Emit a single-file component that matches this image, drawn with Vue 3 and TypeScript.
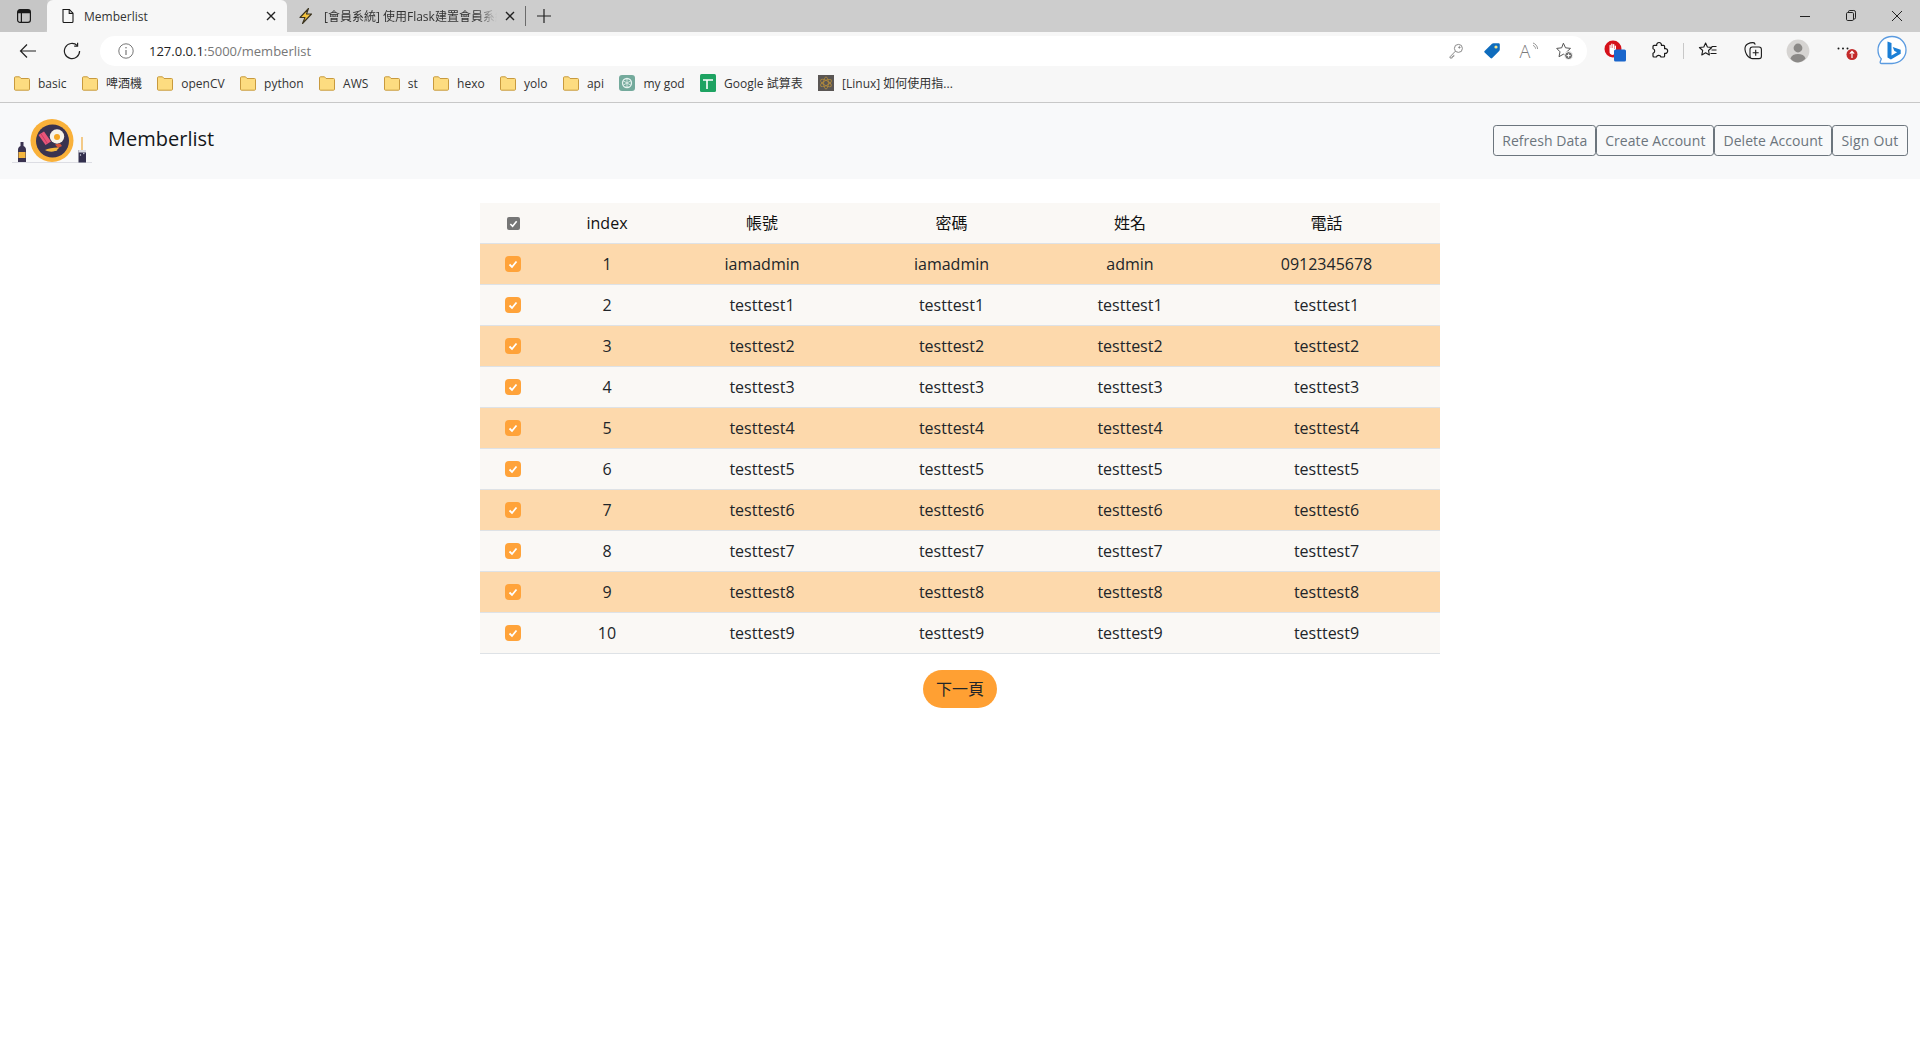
<script setup lang="ts">
import { computed } from 'vue'

type Bookmark = { label: string; icon: 'folder' | 'gpt' | 'sheet' | 'atom' }

const bookmarks: Bookmark[] = [
  { label: 'basic', icon: 'folder' },
  { label: '啤酒機', icon: 'folder' },
  { label: 'openCV', icon: 'folder' },
  { label: 'python', icon: 'folder' },
  { label: 'AWS', icon: 'folder' },
  { label: 'st', icon: 'folder' },
  { label: 'hexo', icon: 'folder' },
  { label: 'yolo', icon: 'folder' },
  { label: 'api', icon: 'folder' },
  { label: 'my god', icon: 'gpt' },
  { label: 'Google 試算表', icon: 'sheet' },
  { label: '[Linux] 如何使用指...', icon: 'atom' }
]

const actions = ['Refresh Data', 'Create Account', 'Delete Account', 'Sign Out']
const columns = ['index', '帳號', '密碼', '姓名', '電話']

const members = computed(() => {
  const rows = [{ id: 1, account: 'iamadmin', password: 'iamadmin', name: 'admin', phone: '0912345678' }]
  for (let i = 1; i <= 9; i++) {
    const t = `testtest${i}`
    rows.push({ id: i + 1, account: t, password: t, name: t, phone: t })
  }
  return rows
})
</script>

<template>
  <div class="page">
    <!-- browser tabs -->
    <div class="tabstrip">
      <div class="side-btn">
        <svg width="16" height="16" viewBox="0 0 16 16" fill="none" stroke="#1a1a1a" stroke-width="1.2">
          <rect x="1.6" y="1.6" width="12.8" height="12.8" rx="2.4" />
          <path d="M1.6 4.6h12.8M5.4 4.6v9.8" />
          <path d="M2 2h12v2.6H2z" fill="#1a1a1a" stroke="none" />
        </svg>
      </div>
      <div class="tab active">
        <svg width="16" height="16" viewBox="0 0 16 16" fill="none" stroke="#1a1a1a" stroke-width="1.1">
          <path d="M3 1.5h6.4L13 5.2v8.3a1 1 0 0 1-1 1H4a1 1 0 0 1-1-1z" />
          <path d="M9.2 1.5v3.9H13" />
        </svg>
        <span class="tab-title">Memberlist</span>
        <svg class="tab-x" width="10" height="10" viewBox="0 0 10 10" stroke="#222" stroke-width="1.4">
          <path d="M1 1l8 8M9 1l-8 8" />
        </svg>
      </div>
      <div class="tab second">
        <svg width="18" height="18" viewBox="0 0 18 18" fill="#f3c23c" stroke="#3a3320" stroke-width="1.1" stroke-linejoin="round">
          <path d="M11.5 1.5L3 10.5h5l-2.5 6 9-9.5H9.5z" />
        </svg>
        <span class="tab-title faded">[會員系統] 使用Flask建置會員系統</span>
        <svg class="tab-x" width="10" height="10" viewBox="0 0 10 10" stroke="#222" stroke-width="1.4">
          <path d="M1 1l8 8M9 1l-8 8" />
        </svg>
      </div>
      <span class="tab-sep"></span>
      <svg class="tab-plus" width="16" height="16" viewBox="0 0 16 16" stroke="#222" stroke-width="1.2">
        <path d="M8 1v14M1 8h14" />
      </svg>
      <div class="win-controls">
        <svg width="46" height="32" viewBox="0 0 46 32" stroke="#222" stroke-width="1" fill="none">
          <path d="M18 16.5h10" />
        </svg>
        <svg width="46" height="32" viewBox="0 0 46 32" stroke="#222" stroke-width="1" fill="none">
          <rect x="18.5" y="12.5" width="7" height="8" rx="1.2" />
          <path d="M20.5 12.5v-.8a1.2 1.2 0 0 1 1.2-1.2h4.1a1.7 1.7 0 0 1 1.7 1.7v5.6a1.2 1.2 0 0 1-1.2 1.2h-.8" />
        </svg>
        <svg width="46" height="32" viewBox="0 0 46 32" stroke="#222" stroke-width="1" fill="none">
          <path d="M18 11l10 10M28 11L18 21" />
        </svg>
      </div>
    </div>

    <!-- address bar row -->
    <div class="toolbar">
      <div class="tool">
        <svg width="18" height="18" viewBox="0 0 18 18" fill="none" stroke="#222" stroke-width="1.2">
          <path d="M17 9H1.5M8 2.5L1.5 9 8 15.5" />
        </svg>
      </div>
      <div class="tool">
        <svg width="18" height="18" viewBox="0 0 18 18" fill="none" stroke="#222" stroke-width="1.2">
          <path d="M14.3 3.6A7.6 7.6 0 1 0 16.6 9" />
          <path d="M14.6 0.8v3.4h-3.4" />
        </svg>
      </div>
      <div class="address">
        <div class="info">
          <svg width="16" height="16" viewBox="0 0 16 16" fill="none" stroke="#777" stroke-width="1">
            <circle cx="8" cy="8" r="7.2" />
            <path d="M8 7v5" stroke-width="1.2" />
            <circle cx="8" cy="4.8" r=".8" fill="#777" stroke="none" />
          </svg>
        </div>
        <span class="url">127.0.0.1<span class="url-dim">:5000/memberlist</span></span>
        <div class="addr-icons">
          <div class="addr-icon">
            <svg width="16" height="16" viewBox="0 0 16 16" fill="none" stroke="#8a8a8a" stroke-width="1">
              <circle cx="10.4" cy="5.4" r="4" />
              <path d="M7.4 8.2L2 13.8V15h2.2v-1.6h1.6v-1.6" />
              <circle cx="11.4" cy="4.4" r=".7" fill="#8a8a8a" />
            </svg>
          </div>
          <div class="addr-icon">
            <svg width="18" height="18" viewBox="0 0 18 18">
              <path d="M10.4 1.2h5.2a1.2 1.2 0 0 1 1.2 1.2v5.2a2 2 0 0 1-.6 1.4l-7 7a1.2 1.2 0 0 1-1.7 0L1.6 10.6a1.2 1.2 0 0 1 0-1.7l7.4-7.1a2 2 0 0 1 1.4-.6z" fill="#0f6cbd" />
              <circle cx="13" cy="5" r="1.6" fill="#f6e58d" />
            </svg>
          </div>
          <div class="addr-icon">
            <span class="read-a">A</span>
            <svg class="read-w" width="8" height="10" viewBox="0 0 8 10" fill="none" stroke="#8a8a8a" stroke-width=".9">
              <path d="M1 1c2.5.8 4.5 3 4.6 6M1 3.4c1.4.5 2.4 1.7 2.6 3.3" />
            </svg>
          </div>
          <div class="addr-icon">
            <svg width="20" height="20" viewBox="0 0 20 20" fill="none" stroke="#555" stroke-width="1">
              <path d="M9.4 2.2l2.1 4.6 5 .6-3.7 3.4 1 4.9-4.4-2.500-4.400 2.500 1-4.900L2.700 7.400l5-.6z" />
              <circle cx="14.600" cy="14.600" r="4" fill="#6f6f6f" stroke="#fff" />
              <path d="M14.600 12.600v4M12.600 14.600h4" stroke="#fff" stroke-width="1" />
            </svg>
          </div>
        </div>
      </div>
      <div class="tools-right">
        <div class="tool">
          <svg width="24" height="24" viewBox="0 0 24 24">
            <path d="M10 1.500a8.500 8.500 0 1 0 0 17a8.500 8.500 0 0 0 0-17z" fill="#d5111a" />
            <path d="M6.500 11V6.400c0-.9 1.300-.9 1.300 0V9h.4V5.200c0-.9 1.400-.9 1.400 0V9h.4V5.600c0-.9 1.400-.9 1.400 0V10h.4V7.200c0-.8 1.200-.8 1.200 0v5.400c0 2-1.400 3.300-3.400 3.300-1.600 0-2.400-.8-3-2.200z" fill="#fff" />
            <rect x="11" y="10.500" width="12" height="12" rx="1.600" fill="#1a66cc" />
          </svg>
        </div>
        <div class="tool">
          <svg width="20" height="20" viewBox="0 0 20 20" fill="none" stroke="#1a1a1a" stroke-width="1.200" stroke-linejoin="round">
            <path d="M7.700 4.400a2.400 2.400 0 1 1 4.700 0h2.200a1 1 0 0 1 1 1v2.300a2.400 2.400 0 1 1 0 4.600v2.700a1 1 0 0 1-1 1h-2.600a2.400 2.400 0 0 0-4.600 0H5a1 1 0 0 1-1-1v-2.700a2.400 2.400 0 0 0 0-4.600V5.400a1 1 0 0 1 1-1z" />
          </svg>
        </div>
        <span class="tool-sep"></span>
        <div class="tool">
          <svg width="20" height="20" viewBox="0 0 20 20" fill="none" stroke="#1a1a1a" stroke-width="1.100" stroke-linejoin="round">
            <path d="M7.600 2l1.800 4 4.400.5-3.300 3 .9 4.400-3.800-2.200-3.800 2.200.9-4.400-3.300-3 4.400-.5z" />
            <path d="M13.500 5.500h5M13.500 9h5M12.500 12.500h6" />
          </svg>
        </div>
        <div class="tool">
          <svg width="20" height="20" viewBox="0 0 20 20" fill="none" stroke="#1a1a1a" stroke-width="1.100">
            <path d="M7 17c-2.400-1.600-4.600-5-5-8.400-.2-2 .6-4.400 2.600-5.600C6 2.200 8 1.600 10 1.600c1 0 2 .8 2.200 2" />
            <rect x="7" y="6" width="11.400" height="11.600" rx="2.400" />
            <path d="M12.700 8.800v6M9.700 11.800h6" />
          </svg>
        </div>
        <div class="tool">
          <svg width="24" height="24" viewBox="0 0 24 24">
            <circle cx="12" cy="12" r="11.400" fill="#d6d4d2" />
            <circle cx="12" cy="9" r="4.400" fill="#8b8987" />
            <path d="M4.400 19.400c1-3 4-4.400 7.600-4.400s6.600 1.400 7.600 4.400A11.400 11.400 0 0 1 12 23.400c-3 0-5.600-1.600-7.600-4z" fill="#8b8987" />
          </svg>
        </div>
        <div class="tool">
          <svg width="30" height="20" viewBox="0 0 30 20">
            <circle cx="10.500" cy="7.500" r="1" fill="#1a1a1a" />
            <circle cx="15" cy="7.500" r="1" fill="#1a1a1a" />
            <circle cx="19.500" cy="7.500" r="1" fill="#1a1a1a" />
            <circle cx="24" cy="13.500" r="5.500" fill="#c42b2b" />
            <path d="M24 17v-6.500M21.800 12.600l2.200-2.200 2.200 2.200" stroke="#fff" stroke-width="1.200" fill="none" />
          </svg>
        </div>
        <div class="tool bing">
          <svg width="32" height="32" viewBox="0 0 32 32">
            <path d="M16 1.500c8 0 14 6 14 13.500s-6 13.500-14 13.500H5.500c-1.200 0-1.600-.9-1.200-2l1-2.600C3 21.500 2 18.500 2 15 2 7.500 8 1.500 16 1.500z" fill="#fff" stroke="#5b9be0" stroke-width="1.300" />
            <path d="M11.500 6.500l4 1.400v12.600l5.600-3.200-2.700-1.300-1.700-4.100 8 2.800v4l-9.800 5.800-3.400-1.900z" fill="#1b7fd6" />
          </svg>
        </div>
      </div>
    </div>

    <!-- bookmarks -->
    <div class="bookmarks">
      <div v-for="b in bookmarks" :key="b.label" class="bookmark">
        <svg v-if="b.icon === 'folder'" width="16" height="15" viewBox="0 0 16 15">
          <path d="M1.500.8h4l1.500 1.700h7.500a1 1 0 0 1 1 1v9.700a1 1 0 0 1-1 1h-13a1 1 0 0 1-1-1V1.800a1 1 0 0 1 1-1z" fill="#fddc80" stroke="#c89a3e" />
        </svg>
        <svg v-else-if="b.icon === 'gpt'" width="16" height="16" viewBox="0 0 16 16">
          <rect width="16" height="16" rx="3" fill="#74aa9c" />
          <circle cx="8" cy="8" r="4.500" fill="none" stroke="#e6f2ef" stroke-width="1.300" />
          <path d="M8 3.500v9M4 5.700l8 4.600M12 5.700l-8 4.600" stroke="#e6f2ef" stroke-width=".8" />
        </svg>
        <svg v-else-if="b.icon === 'sheet'" width="16" height="18" viewBox="0 0 16 18">
          <rect width="16" height="18" rx="1.500" fill="#1ea362" />
          <path d="M3 6h10M7 6v9" stroke="#fff" stroke-width="1.600" />
        </svg>
        <svg v-else width="16" height="16" viewBox="0 0 16 16">
          <rect width="16" height="16" fill="#5a5654" />
          <g fill="none" stroke="#b08a3c" stroke-width=".9">
            <ellipse cx="8" cy="8" rx="2.400" ry="6" />
            <ellipse cx="8" cy="8" rx="2.400" ry="6" transform="rotate(60 8 8)" />
            <ellipse cx="8" cy="8" rx="2.400" ry="6" transform="rotate(120 8 8)" />
          </g>
        </svg>
        <span>{{ b.label }}</span>
      </div>
    </div>

    <!-- the actual page -->
    <nav class="navbar">
      <div class="brand">
        <svg class="logo" width="80" height="60" viewBox="0 0 80 60">
          <path d="M0 51.500h80" stroke="#dcdde3" stroke-width="1.200" />
          <circle cx="40" cy="29.500" r="21.500" fill="#f9b13a" />
          <circle cx="40.500" cy="30" r="16.500" fill="#3a3350" />
          <path d="M26.500 24l5.500-3.500 7 10-5.500 3.500z" fill="#e8557a" />
          <path d="M29 22.800l6.500 10" stroke="#c93c60" stroke-width="1" />
          <circle cx="45" cy="25.500" r="7.200" fill="#f7f3ea" />
          <circle cx="45" cy="26" r="3" fill="#f5a623" />
          <path d="M43 33.500l5-1 2 2.500-4 2z" fill="#d9553a" />
          <path d="M33 39c3-1.500 8-2.500 13-2.500 1.500 0 .5 1.500-1 2.200 1 .6-.5 1.300-2 1.300-3 1.300-7 .8-10-1z" fill="#f4b73f" />
          <path d="M8.500 31h3v4c2 1 2.500 2 2.500 4v12H6V39c0-2 .5-3 2.500-4z" fill="#3a3350" />
          <rect x="6.500" y="41" width="7" height="6" fill="#f4b73f" />
          <path d="M70 26v13" stroke="#f0a93a" stroke-width="1.200" />
          <path d="M66.500 39h7.500v12.500h-7.500z" fill="#33304e" />
          <path d="M66.500 39h7.500v2.500h-7.500z" fill="#d8dbe4" />
          <circle cx="68.500" cy="44" r=".7" fill="#d8dbe4" />
          <circle cx="71.800" cy="42.500" r=".7" fill="#d8dbe4" />
        </svg>
        <span class="brand-name">Memberlist</span>
      </div>
      <div class="actions">
        <button v-for="a in actions" :key="a" class="action" type="button">{{ a }}</button>
      </div>
    </nav>

    <main class="content">
      <table class="members">
        <thead>
          <tr>
            <th>
              <span class="check head">
                <svg width="9" height="9" viewBox="0 0 10 10" fill="none" stroke="#fff" stroke-width="1.800">
                  <path d="M1.500 5.500l2.500 2.500 4.500-5.500" />
                </svg>
              </span>
            </th>
            <th v-for="c in columns" :key="c">{{ c }}</th>
          </tr>
        </thead>
        <tbody>
          <tr v-for="m in members" :key="m.id" :class="{ odd: m.id % 2 === 1 }">
            <td>
              <span class="check">
                <svg width="10" height="10" viewBox="0 0 10 10" fill="none" stroke="#fff" stroke-width="1.800">
                  <path d="M1.500 5.500l2.500 2.500 4.500-5.500" />
                </svg>
              </span>
            </td>
            <td>{{ m.id }}</td>
            <td>{{ m.account }}</td>
            <td>{{ m.password }}</td>
            <td>{{ m.name }}</td>
            <td>{{ m.phone }}</td>
          </tr>
        </tbody>
      </table>
      <button class="next" type="button">下一頁</button>
    </main>
  </div>
</template>

<style>
html,
body {
  margin: 0;
  background: #fff;
}
</style>

<style scoped>
.page {
  width: 1920px;
  height: 1040px;
  overflow: hidden;
  background: #fff;
  color: #212529;
  font-family: "Open Sans", "Noto Sans CJK TC", sans-serif;
}

.tabstrip {
  height: 32px;
  background: #cdcdcd;
  display: flex;
  align-items: center;
  font-size: 12px;
}

.side-btn {
  width: 47px;
  height: 32px;
  display: flex;
  align-items: center;
  justify-content: center;
  background: #c6c6c6;
  border-radius: 0 0 4px 0;
}

.tab {
  width: 240px;
  height: 32px;
  box-sizing: border-box;
  padding: 0 11px 0 10px;
  display: flex;
  align-items: center;
  color: #333;
}

.tab.second {
  width: 238px;
  padding-right: 10px;
}

.tab.active {
  background: #f7f7f7;
  border-radius: 6px 6px 0 0;
  padding-left: 13px;
}

.tab-title {
  margin-left: 8px;
  flex: 1;
  white-space: nowrap;
  overflow: hidden;
}

.tab-title.faded {
  margin-left: 9px;
  -webkit-mask-image: linear-gradient(to right, #000 88%, transparent 100%);
  mask-image: linear-gradient(to right, #000 88%, transparent 100%);
  margin-right: 8px;
}

.tab-x {
  flex: none;
}

.tab-sep {
  width: 1px;
  height: 20px;
  background: #6b6b6b;
}

.tab-plus {
  margin-left: 10px;
}

.win-controls {
  margin-left: auto;
  display: flex;
}

.toolbar {
  height: 38px;
  background: #f7f7f7;
  display: flex;
  align-items: center;
  padding: 0 6px;
}

.tool {
  width: 44px;
  height: 30px;
  flex: none;
  display: flex;
  align-items: center;
  justify-content: center;
}

.address {
  flex: 1;
  height: 30px;
  margin-left: 6px;
  background: #fff;
  border-radius: 15px;
  display: flex;
  align-items: center;
  padding-right: 5px;
  font-size: 13px;
}

.info {
  width: 52px;
  display: flex;
  justify-content: center;
}

.url {
  color: #1f1f1f;
  margin-left: -3px;
}

.url-dim {
  color: #777;
}

.addr-icons {
  margin-left: auto;
  display: flex;
}

.addr-icon {
  width: 36px;
  height: 30px;
  display: flex;
  align-items: center;
  justify-content: center;
  position: relative;
}

.read-a {
  font-size: 18px;
  font-weight: 300;
  line-height: 1;
  color: #7a7a7a;
  margin-right: 6px;
}

.read-w {
  position: absolute;
  top: 6px;
  right: 6px;
}

.tools-right {
  margin-left: 6px;
  display: flex;
  align-items: center;
}

.tools-right .tool + .tool {
  margin-left: 1px;
}

.tools-right .tool:nth-child(2) {
  margin-left: 0;
}

.tool-sep {
  width: 1px;
  height: 16px;
  margin: 0 2px;
  background: #c8c8c8;
}

.tools-right .tool.bing {
  margin-left: 5px;
}

.bookmarks {
  height: 33px;
  box-sizing: border-box;
  padding: 0 0 6px 14px;
  background: #f7f7f7;
  border-bottom: 1px solid #c8c8c8;
  display: flex;
  align-items: center;
  gap: 15.4px;
  font-size: 12px;
  color: #333;
}

.bookmark {
  display: flex;
  align-items: center;
  gap: 8px;
  white-space: nowrap;
}

.navbar {
  height: 76px;
  box-sizing: border-box;
  padding: 8px 12px;
  background: #f8f9fa;
  display: flex;
  justify-content: space-between;
}

.brand {
  display: flex;
  align-items: center;
  gap: 16px;
}

.brand-name {
  font-size: 20px;
  color: #14171a;
  margin-bottom: 6px;
}

.actions {
  display: flex;
  margin-top: 14px;
  height: 31px;
}

.action {
  font: inherit;
  font-size: 14px;
  line-height: 21px;
  letter-spacing: 0.05px;
  padding: 4px 8px;
  color: #6c757d;
  background: transparent;
  border: 1px solid #6c757d;
  border-radius: 3.2px;
  cursor: pointer;
}

.action:last-child {
  letter-spacing: 0.2px;
  padding: 4px 8.5px;
}

.content {
  display: flex;
  flex-direction: column;
  align-items: center;
  padding-top: 24px;
}

.members {
  width: 960px;
  table-layout: fixed;
  border-collapse: collapse;
  font-size: 16px;
  line-height: 24px;
}

.members th,
.members td {
  box-sizing: border-box;
  padding: 8px;
  text-align: center;
  font-weight: 400;
  background: #faf8f5;
  border-bottom: 1px solid #dee2e6;
}

.members th {
  color: #111;
}

.members tr.odd td {
  background: #fdd9ac;
}

.members th:nth-child(1) {
  width: 66px;
}

.members th:nth-child(2) {
  width: 122px;
}

.members th:nth-child(3) {
  width: 188px;
}

.members th:nth-child(4) {
  width: 191px;
}

.members th:nth-child(5) {
  width: 166px;
}

.check {
  display: flex;
  width: 16px;
  height: 16px;
  margin: 4px auto;
  border-radius: 4px;
  background: #ffa33a;
  align-items: center;
  justify-content: center;
}

.check.head {
  width: 13px;
  height: 13px;
  margin: 5px auto;
  border-radius: 2px;
  background: #767676;
}

.next {
  margin-top: 16px;
  font: inherit;
  font-size: 16px;
  line-height: 24px;
  height: 38px;
  width: 74px;
  padding: 0;
  border: none;
  border-radius: 19px;
  background: #ffa033;
  color: #212529;
  cursor: pointer;
}
</style>
